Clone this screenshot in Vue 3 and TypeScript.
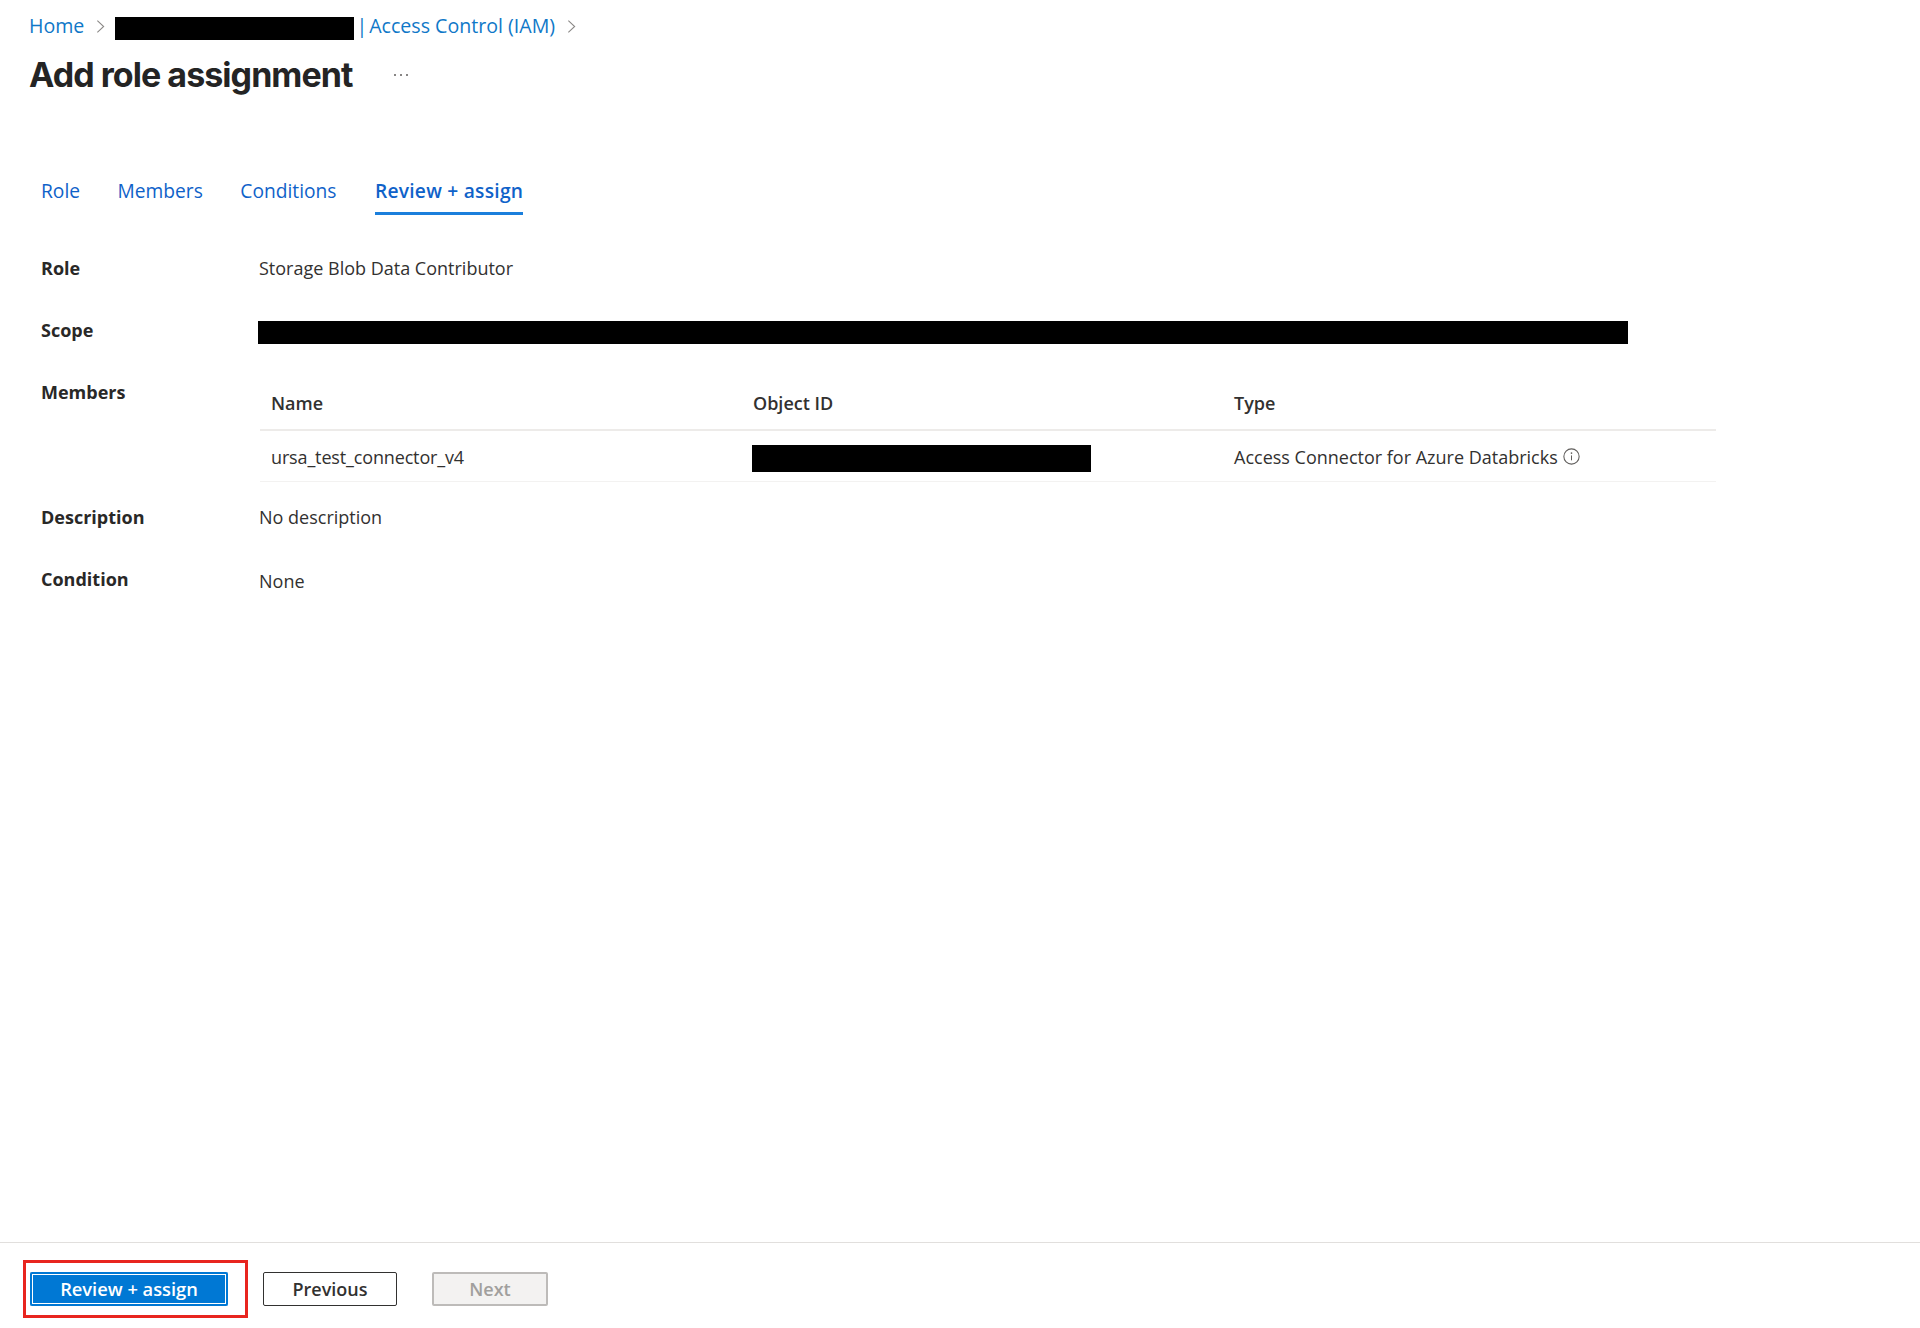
<script setup lang="ts">
const tabs = ['Role', 'Members', 'Conditions', 'Review + assign']
const activeTab = 'Review + assign'
</script>

<template>
  <div class="page">
    <main class="main">
      <nav class="breadcrumb">
        <a class="crumb">Home</a>
        <svg class="chevron" viewBox="0 0 10 16"><path d="M1.5 1.5 8.5 8l-7 6.5" /></svg>
        <span class="redacted redacted--crumb"></span>
        <span class="crumb crumb-bar">|</span>
        <a class="crumb">Access Control (IAM)</a>
        <svg class="chevron" viewBox="0 0 10 16"><path d="M1.5 1.5 8.5 8l-7 6.5" /></svg>
      </nav>

      <header class="title-row">
        <h1 class="title">Add role assignment</h1>
        <svg class="more" viewBox="0 0 16 4">
          <circle cx="2" cy="2" r="1" />
          <circle cx="8" cy="2" r="1" />
          <circle cx="14" cy="2" r="1" />
        </svg>
      </header>

      <div class="tabs">
        <a
          v-for="tab in tabs"
          :key="tab"
          class="tab"
          :class="{ 'tab--active': tab === activeTab }"
        >{{ tab }}</a>
      </div>

      <section class="details">
        <div class="label">Role</div>
        <div class="value">Storage Blob Data Contributor</div>

        <div class="label">Scope</div>
        <div class="value"><span class="redacted redacted--scope"></span></div>

        <div class="label">Members</div>
        <div class="value value--table">
          <table class="members">
            <thead>
              <tr>
                <th>Name</th>
                <th>Object ID</th>
                <th>Type</th>
              </tr>
            </thead>
            <tbody>
              <tr>
                <td class="member-name">ursa_test_connector_v4</td>
                <td><span class="redacted redacted--id"></span></td>
                <td>
                  <span class="type-cell">
                    Access Connector for Azure Databricks
                    <svg class="info" viewBox="0 0 16 16">
                      <circle cx="8" cy="8" r="7.2" />
                      <path d="M8 7v4.6" />
                      <circle class="info-dot" cx="8" cy="4.8" r="0.8" />
                    </svg>
                  </span>
                </td>
              </tr>
            </tbody>
          </table>
        </div>

        <div class="label">Description</div>
        <div class="value">No description</div>

        <div class="label">Condition</div>
        <div class="value value--none">None</div>
      </section>
    </main>

    <footer class="footer">
      <div class="highlight">
        <button type="button" class="btn btn--primary">Review + assign</button>
      </div>
      <button type="button" class="btn btn--secondary">Previous</button>
      <button type="button" class="btn btn--disabled" disabled>Next</button>
    </footer>
  </div>
</template>

<style scoped>
.page {
  display: flex;
  flex-direction: column;
  height: 1328px;
  background: #ffffff;
  color: #323130;
  font-family: "Open Sans", "Noto Sans", sans-serif;
  font-size: 18px;
  line-height: 24px;
}

.main {
  flex: 1;
  padding-top: 14px;
}

.redacted {
  display: block;
  background: #000000;
}

.breadcrumb {
  display: flex;
  align-items: center;
  height: 24px;
  padding-left: 29px;
  color: #0f78c8;
}

.crumb {
  font-size: 19.6px;
}

.crumb-bar {
  margin: 0 2px 0 2px;
}

.chevron {
  width: 9px;
  height: 15px;
  margin: 0 10px 0 12px;
  flex: none;
}

.chevron path {
  fill: none;
  stroke: #8a8886;
  stroke-width: 1.2;
}

.redacted--crumb {
  width: 239px;
  height: 23px;
  margin-top: 5px;
}

.title-row {
  display: flex;
  align-items: center;
  height: 44px;
  margin-top: 15px;
  padding-left: 29px;
}

.title {
  margin: 0;
  width: 364px;
  font-family: "Inter", "Liberation Sans", sans-serif;
  font-size: 34px;
  font-weight: 700;
  letter-spacing: -0.95px;
  line-height: 44px;
  color: #242424;
}

.more {
  width: 16px;
  height: 4px;
}

.more circle {
  fill: #605e5c;
}

.tabs {
  display: flex;
  gap: 37.5px;
  margin-top: 82px;
  padding-left: 41px;
}

.tab {
  padding-bottom: 9px;
  border-bottom: 3px solid transparent;
  color: #0f62c9;
  font-size: 19.2px;
}

.tab--active {
  margin-left: 1px;
  font-weight: 600;
  letter-spacing: 0.25px;
  border-bottom-color: #1b7fdc;
}

.details {
  display: grid;
  grid-template-columns: 218px 1fr;
  margin-top: 41px;
  padding-left: 41px;
  width: 1751px;
}

.label {
  padding-bottom: 38px;
  font-weight: 700;
  color: #292827;
}

.value {
  padding-bottom: 38px;
}

.value--table {
  padding-bottom: 23px;
}

.value--none {
  padding-top: 2px;
}

.redacted--scope {
  width: 1370px;
  height: 23px;
  margin: 3px 0 -2px -1px;
}

.members {
  width: 1456px;
  margin-left: 1px;
  border-collapse: collapse;
  table-layout: fixed;
}

.members th {
  box-sizing: border-box;
  height: 50px;
  padding: 11px 0 0 11px;
  border-bottom: 2px solid #edebe9;
  font-weight: 600;
  text-align: left;
  vertical-align: top;
}

.members th:nth-child(1) {
  width: 482px;
}

.members th:nth-child(2) {
  width: 481px;
}

.members td {
  box-sizing: border-box;
  height: 51px;
  padding: 2px 0 0 11px;
  border-bottom: 1px solid #f3f2f1;
}

.members .member-name {
  letter-spacing: -0.15px;
}

.redacted--id {
  width: 339px;
  height: 27px;
  margin: 3px 0 -1px -1px;
}

.type-cell {
  display: inline-flex;
  align-items: center;
  gap: 5px;
}

.info {
  width: 17px;
  height: 17px;
  margin-top: -1px;
}

.info circle,
.info path {
  fill: none;
  stroke: #605e5c;
  stroke-width: 1;
}

.info .info-dot {
  fill: #605e5c;
  stroke: none;
}

.footer {
  display: flex;
  align-items: center;
  height: 86px;
  padding: 7px 0 0 23px;
  box-sizing: border-box;
  border-top: 1.5px solid #e1dfdd;
}

.highlight {
  padding: 9px 17px 9px 4px;
  border: 3px solid #e8251f;
  margin-right: 15px;
}

.btn {
  display: block;
  height: 34px;
  padding: 0;
  font-family: inherit;
  font-size: 18px;
  font-weight: 600;
  border-radius: 2px;
  box-sizing: border-box;
}

.btn--primary {
  width: 198px;
  padding-bottom: 2px;
  border: none;
  background: #0078d4;
  color: #ffffff;
  font-size: 18.3px;
  box-shadow: inset 0 0 0 2px #0078d4, inset 0 0 0 3px #ffffff;
}

.btn--secondary {
  width: 134px;
  border: 1.5px solid #323130;
  background: #ffffff;
  color: #323130;
  margin-right: 35px;
}

.btn--disabled {
  width: 116px;
  border: 2px solid #bdbbb9;
  background: #f3f2f1;
  color: #a19f9d;
}
</style>

<style>
body {
  background: #ffffff;
}
</style>
